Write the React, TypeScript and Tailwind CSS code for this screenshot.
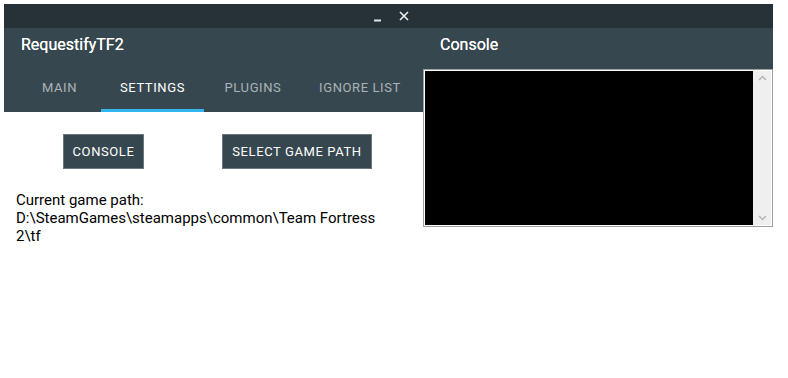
import React from "react"

const tabs = [
  { label: "MAIN", w: "w-[83px]", active: false },
  { label: "SETTINGS", w: "w-[103px]", active: true },
  { label: "PLUGINS", w: "w-[98px]", active: false },
  { label: "IGNORE LIST", w: "w-[116px]", active: false },
]

export default function App() {
  return (
    <div className="w-[788px] h-[378px] bg-white pt-[4px] pl-[4px] font-['Roboto',sans-serif]">
      <div className="w-[769px]">
        {/* title bar */}
        <div className="h-[24px] bg-[#263238] flex items-center justify-end pr-[364px] gap-[17px]">
          <svg width="8" height="10" viewBox="0 0 8 10" className="mt-[2px]">
            <rect x="0" y="7.5" width="7" height="2" fill="#e0e4e6" />
          </svg>
          <svg width="10" height="10" viewBox="0 0 10 10">
            <path d="M1 1 L9 9 M9 1 L1 9" stroke="#eef1f2" strokeWidth="1.6" />
          </svg>
        </div>

        <div className="flex">
          {/* left panel */}
          <div className="w-[419px]">
            <div className="bg-[#37474f] h-[84px]">
              <div className="h-[36px] pt-[7px] pl-[17px] text-white text-[16px] leading-[20px] [text-shadow:0_0_0.4px_#fff]">
                RequestifyTF2
              </div>
              <div className="flex h-[48px] pl-[14px]">
                {tabs.map((t) => (
                  <div
                    key={t.label}
                    className={`${t.w} relative flex items-center justify-center text-[13px] tracking-[0.6px] ${
                      t.active ? "text-white" : "text-[#aab3b8]"
                    }`}
                  >
                    {t.label}
                    {t.active && <div className="absolute left-0 right-0 bottom-0 h-[3px] bg-[#33b5f0]" />}
                  </div>
                ))}
              </div>
            </div>

            <div className="flex pt-[22px] pl-[59px]">
              <button className="w-[81px] h-[35px] bg-[#37474f] border border-[#6a787e] text-white text-[13px] tracking-[0.6px]">
                CONSOLE
              </button>
              <button className="ml-[78px] w-[150px] h-[35px] bg-[#37474f] border border-[#6a787e] text-white text-[13px] tracking-[0.6px]">
                SELECT GAME PATH
              </button>
            </div>

            <div className="pt-[22px] pl-[12px] text-[15px] leading-[18px] text-black">
              <div>Current game path:</div>
              <div>D:\SteamGames\steamapps\common\Team Fortress</div>
              <div>2\tf</div>
            </div>
          </div>

          {/* right panel */}
          <div className="w-[350px]">
            <div className="bg-[#37474f] h-[41px] pt-[7px] pl-[17px] text-white text-[16px] leading-[20px] [text-shadow:0_0_0.4px_#fff]">
              Console
            </div>
            <div className="h-[158px] border border-[#a0a0a0] p-[1px] bg-white flex">
              <div className="flex-1 bg-black" />
              <div className="w-[18px] bg-[#efefef] flex flex-col items-center justify-between py-[4px]">
                <svg width="9" height="6" viewBox="0 0 9 6">
                  <path d="M1 5 L4.5 1.5 L8 5" stroke="#b4b4b4" strokeWidth="1.5" fill="none" />
                </svg>
                <svg width="9" height="6" viewBox="0 0 9 6">
                  <path d="M1 1 L4.5 4.5 L8 1" stroke="#b4b4b4" strokeWidth="1.5" fill="none" />
                </svg>
              </div>
            </div>
          </div>
        </div>
      </div>
    </div>
  )
}
